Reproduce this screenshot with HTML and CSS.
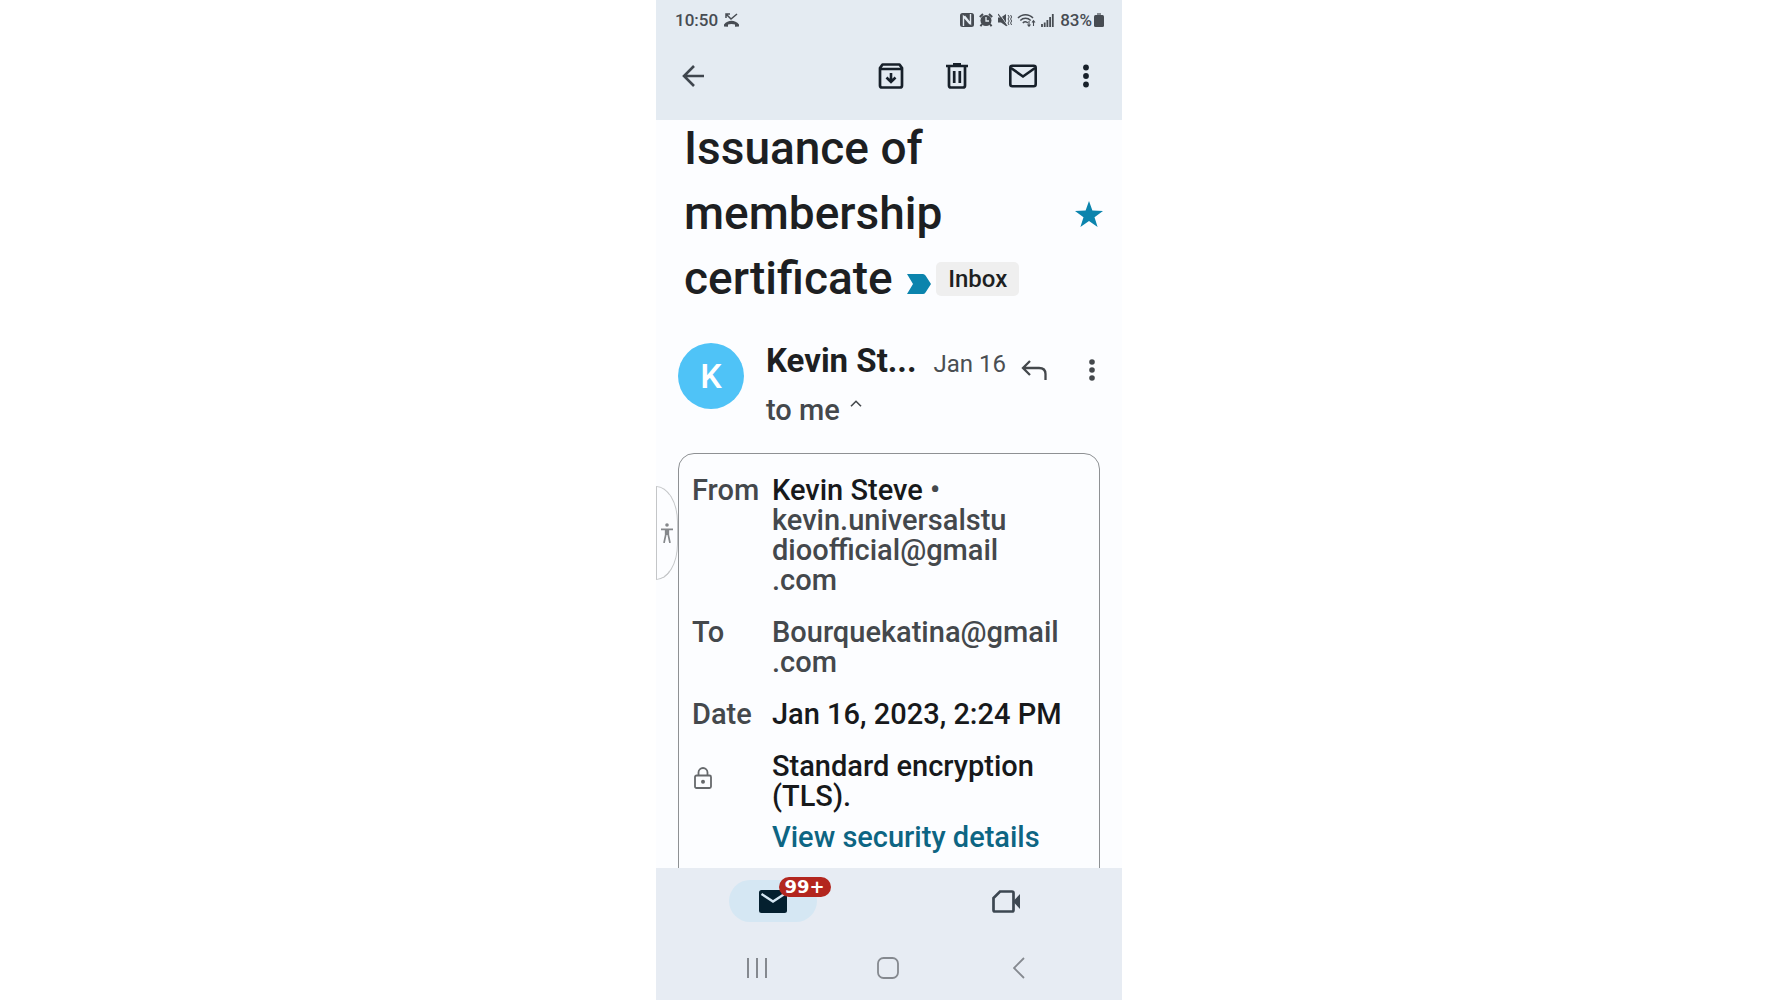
FILE: index.html
```
<!DOCTYPE html>
<html lang="en">
<head>
<meta charset="utf-8">
<meta name="viewport" content="width=device-width, initial-scale=1">
<title>Issuance of membership certificate</title>
<link rel="stylesheet" href="styles.css">
</head>
<body>
<div class="phone">
  <header class="top">
    <div class="status">
      <span>10:50</span>
      <svg class="status-call" width="15" height="14" viewBox="0 0 15 14"><path d="M2 5V1h4M2.500 1.500l4.500 4.500L13 1" fill="none" stroke="currentColor" stroke-width="1.500"/><path d="M0 11.500c4-5 11-5 15 0v2l-4 .3v-2.300c-2-.8-5-.8-7 0v2.300l-4-.3z" fill="currentColor"/></svg>
      <div class="status-icons">
        <svg width="14" height="14" viewBox="0 0 14 14"><rect width="14" height="14" rx="2.500" fill="currentColor"/><path d="M3.500 13V3.500l6.500 7.500M10.500 1v9.500L4.500 3" fill="none" stroke="#e4ebf2" stroke-width="1.400"/></svg>
        <svg width="14" height="14" viewBox="0 0 14 14"><circle cx="7" cy="7.500" r="5.500" fill="currentColor"/><path d="M.8 4L4 1M13.200 4L10 1M3 11l-1.500 2.300M11 11l1.500 2.300" stroke="currentColor" stroke-width="2"/><path d="M7 4v4h3" fill="none" stroke="#e4ebf2" stroke-width="1.300"/></svg>
        <svg width="14" height="14" viewBox="0 0 14 14"><path d="M0 4.500h3L8 1v12L3 9.500H0z" fill="currentColor"/><path d="M1 0l8 12" stroke="#e4ebf2" stroke-width="1"/><path d="M0 1l9 12" stroke="currentColor" stroke-width="1.200"/><path d="M10 2l1.200 2L10 6l1.200 2L10 10l1 2M12.600 2l1 2-1 2 1 2-1 2 1 2" fill="none" stroke="currentColor"/></svg>
        <svg width="19" height="14" viewBox="0 0 19 14"><path d="M1 5c4-4.500 11-4.500 15 0M3.300 7.500c3-3 7.400-3 10.400 0M5.800 10c1.600-1.600 3.800-1.600 5 0" fill="none" stroke="currentColor" stroke-width="1.500"/><path d="M12 8v5M10.500 11.500L12 13.300l1.500-1.800M16.500 13V8M15 9.500l1.500-1.800L18 9.500" fill="none" stroke="currentColor" stroke-width="1.100"/></svg>
        <svg width="13" height="14" viewBox="0 0 13 14"><path d="M1 14v-3M3.700 14V9.500M6.400 14V7M9.100 14V4M11.800 14V1" stroke="currentColor" stroke-width="1.800"/></svg>
      </div>
      <span>83%</span>
      <svg class="status-battery" width="10" height="14" viewBox="0 0 10 14"><rect y="2" width="10" height="12" rx="1.500" fill="currentColor"/><path d="M3 0h4v2H3z" fill="currentColor" opacity=".6"/></svg>
    </div>
    <div class="toolbar">
      <button class="tool tool-back" aria-label="Back"><svg width="22" height="22" viewBox="0 0 22 22"><path d="M22 11H2M12 1L2 11l10 10" fill="none" stroke="currentColor" stroke-width="2.600"/></svg></button>
      <button class="tool" aria-label="Archive"><svg width="26" height="26" viewBox="0 0 26 26"><path d="M2 5l2.500-3.500h17L24 5v17.500q0 2-2 2H4q-2 0-2-2zM2 6h22" fill="none" stroke="currentColor" stroke-width="2.700" stroke-linejoin="round"/><path d="M13 10v8M8.500 14.500L13 19l4.500-4.500" fill="none" stroke="currentColor" stroke-width="2.600"/></svg></button>
      <button class="tool" aria-label="Delete"><svg width="22" height="26" viewBox="0 0 22 26"><path d="M0 3h22M3 3v19.500q0 2 2 2h12q2 0 2-2V3M8.200 8v12M13.800 8v12" fill="none" stroke="currentColor" stroke-width="2.700"/><path d="M7 0h8v3H7z" fill="currentColor"/></svg></button>
      <button class="tool" aria-label="Mark as unread"><svg width="28" height="24" viewBox="0 0 28 24"><rect x="1.300" y="1.800" width="25.400" height="20.400" rx="2" fill="none" stroke="currentColor" stroke-width="2.600"/><path d="M2 4l12 8.500L26 4" fill="none" stroke="currentColor" stroke-width="2.600"/></svg></button>
      <button class="tool tool-more" aria-label="More options"><svg width="6" height="24" viewBox="0 0 6 24"><g fill="currentColor"><circle cx="3" cy="3.500" r="2.900"/><circle cx="3" cy="12" r="2.900"/><circle cx="3" cy="20.500" r="2.900"/></g></svg></button>
    </div>
  </header>

  <main class="message">
    <div class="subject">
      <h1 class="subject-text">Issuance of membership certificate <span class="labels"><svg width="24" height="20" viewBox="0 0 24 20"><path d="M0 0h16q1.500 0 2.500 1.500L24 10l-5.500 8.500Q17.500 20 16 20H0l6-10z" fill="#0b84ad"/></svg><span class="chip">Inbox</span></span></h1>
      <button class="star" aria-label="Starred"><svg width="28" height="26" viewBox="0 0 28 26"><path d="M14 0l3.400 9.600L28 9.900l-8.500 6.300 3.100 9.800L14 20l-8.600 6 3.100-9.800L0 9.900l10.600-.3z" fill="#0b84ad"/></svg></button>
    </div>

    <div class="sender">
      <div class="avatar">K</div>
      <div class="who">
        <div class="name-line"><span class="name">Kevin St...</span><span class="date">Jan 16</span></div>
        <button class="recipients">to me <svg width="12" height="7" viewBox="0 0 12 7"><path d="M1 6.300l5-5 5 5" fill="none" stroke="currentColor" stroke-width="1.600"/></svg></button>
      </div>
      <button class="act" aria-label="Reply"><svg width="26" height="20" viewBox="0 0 26 20"><path d="M9 1L2 8l7 7M2 8h16q6.500 0 6.500 6v6" fill="none" stroke="currentColor" stroke-width="2.300"/></svg></button>
      <button class="act act-more" aria-label="More"><svg width="6" height="22" viewBox="0 0 6 22"><g fill="currentColor"><circle cx="3" cy="3" r="2.800"/><circle cx="3" cy="11" r="2.800"/><circle cx="3" cy="19" r="2.800"/></g></svg></button>
    </div>

    <dl class="details">
      <dt>From</dt>
      <dd><span class="strong">Kevin Steve</span> •<br>kevin.universalstu<br>dioofficial@gmail<br>.com</dd>
      <dt>To</dt>
      <dd>Bourquekatina@gmail<br>.com</dd>
      <dt>Date</dt>
      <dd class="strong">Jan 16, 2023, 2:24 PM</dd>
      <dt class="lock"><svg width="18" height="22" viewBox="0 0 18 22"><rect x="1" y="8.500" width="16" height="12.500" rx="1.500" fill="none" stroke="currentColor" stroke-width="1.800"/><path d="M4.500 8.500V5.500a4.500 4.500 0 0 1 9 0v3" fill="none" stroke="currentColor" stroke-width="1.800"/><circle cx="9" cy="14.700" r="2" fill="currentColor"/></svg></dt>
      <dd class="strong">Standard encryption (TLS).<a class="security" href="#">View security details</a></dd>
    </dl>
    <button class="assist" aria-label="Accessibility"><svg width="12" height="20" viewBox="0 0 12 20"><circle cx="6" cy="2" r="1.800" fill="currentColor"/><path d="M0 6.300h12M6 6v6M4.700 6v6L3 20M7.300 6v6L9 20" fill="none" stroke="currentColor" stroke-width="1.700"/></svg></button>
  </main>

  <footer class="bottom">
    <nav class="tabs">
      <a class="tab" href="#" aria-label="Mail"><span class="pill"><svg width="28" height="23" viewBox="0 0 28 23"><rect width="28" height="23" rx="2.500" fill="#04202f"/><path d="M2.500 4L14 11.500 25.500 4" fill="none" stroke="#d5e7f3" stroke-width="2.400"/></svg><span class="badge">99+</span></span></a>
      <a class="tab" href="#" aria-label="Meet"><svg width="28" height="23" viewBox="0 0 28 23"><path d="M8 1.500h12q1.500 0 1.500 1.500v17q0 1.500-1.500 1.500H3q-1.500 0-1.500-1.500V8z" fill="none" stroke="#3d4751" stroke-width="2.700"/><path d="M21 11.500l7-7.500v15z" fill="#3d4751"/></svg></a>
    </nav>
    <nav class="system">
      <button aria-label="Recent apps"><svg width="22" height="22" viewBox="0 0 22 22"><path d="M2 1v20M11 1v20M20 1v20" stroke="currentColor" stroke-width="2"/></svg></button>
      <button aria-label="Home"><svg width="22" height="22" viewBox="0 0 22 22"><rect x="1" y="1" width="20" height="20" rx="5.500" fill="none" stroke="currentColor" stroke-width="1.800"/></svg></button>
      <button aria-label="Back"><svg width="12" height="22" viewBox="0 0 12 22"><path d="M11 1L1 11l10 10" fill="none" stroke="currentColor" stroke-width="1.800"/></svg></button>
    </nav>
  </footer>
</div>
</body>
</html>
```
FILE: styles.css
```
* {
  box-sizing: border-box;
}

body {
  margin: 0;
  background: #fff;
  font-family: Roboto, "Liberation Sans", sans-serif;
  color: #1d1f22;
}

button {
  margin: 0;
  padding: 0;
  border: 0;
  background: none;
  color: inherit;
  font: inherit;
}

svg {
  display: block;
  flex: none;
}

.phone {
  display: flex;
  flex-direction: column;
  width: 100%;
  max-width: 466px;
  height: 100vh;
  margin: 0 auto;
  background: #fcfdff;
}

/* Status bar and toolbar */
.top {
  flex: none;
  padding-bottom: 8px;
  background: #e4ebf2;
}

.status {
  display: flex;
  align-items: center;
  height: 40px;
  padding: 0 18px 0 19px;
  color: #474c53;
  font-size: 17px;
  font-weight: 500;
}

.status-call {
  margin-left: 6px;
}

.status-icons {
  display: flex;
  gap: 5px;
  margin: 0 6px 0 auto;
}

.status-battery {
  margin-left: 2px;
}

.toolbar {
  display: flex;
  align-items: center;
  height: 72px;
  padding: 0 6px 0 26px;
  color: #17202a;
}

.tool {
  display: flex;
  justify-content: center;
  width: 66px;
}

.tool-back {
  justify-content: flex-start;
  margin-right: auto;
  color: #3f464e;
}

.tool-more {
  width: 60px;
}

/* Message */
.message {
  position: relative;
  flex: 1;
  min-height: 0;
  overflow: hidden;
}

.subject {
  display: flex;
  align-items: center;
  justify-content: space-between;
  margin-top: -4px;
  padding: 0 19px 0 28px;
}

.subject-text {
  width: 350px;
  margin: 0;
  font-size: 46px;
  font-weight: 500;
  line-height: 65px;
}

.labels {
  display: inline-flex;
  align-items: center;
  gap: 5px;
  vertical-align: top;
  height: 65px;
  margin-left: 3px;
}

.labels svg {
  margin-top: 10px;
}

.chip {
  padding: 0 12px;
  border-radius: 5px;
  background: #efefef;
  font-size: 24px;
  font-weight: 500;
  line-height: 34px;
}

.sender {
  display: flex;
  padding: 28px 27px 0 22px;
}

.avatar {
  display: flex;
  align-items: center;
  justify-content: center;
  flex: none;
  width: 66px;
  height: 66px;
  margin-top: 4px;
  border-radius: 50%;
  background: #4fc3f7;
  color: #fff;
  font-size: 34px;
  font-weight: 500;
}

.who {
  flex: 1;
  margin-left: 22px;
  white-space: nowrap;
}

.name-line {
  display: flex;
  align-items: baseline;
  gap: 17px;
  line-height: 44px;
}

.name {
  font-size: 33px;
  font-weight: 700;
}

.date {
  color: #4a4e52;
  font-size: 24px;
}

.recipients {
  display: flex;
  gap: 10px;
  color: #44484c;
  font-size: 29px;
  font-weight: 500;
  line-height: 48px;
}

.recipients svg {
  margin-top: 14px;
}

.act {
  display: flex;
  align-items: center;
  height: 62px;
  color: #44484c;
}

.act-more {
  margin-left: 42px;
}

.details {
  display: grid;
  grid-template-columns: 80px 1fr;
  row-gap: 22px;
  margin: 19px 22px 0;
  padding: 21px 14px 40px 13px;
  border: 1px solid #8e9194;
  border-radius: 16px;
  color: #44484c;
  font-size: 29px;
  font-weight: 500;
  line-height: 30px;
}

.details dd {
  margin: 0;
}

.details .strong {
  color: #17191b;
}

.lock {
  padding: 16px 0 0 2px;
  color: #66696c;
}

.details .security {
  display: block;
  margin-top: 11px;
  color: #0d6583;
  text-decoration: none;
}

.assist {
  position: absolute;
  top: 366px;
  left: 0;
  display: flex;
  align-items: center;
  justify-content: center;
  width: 22px;
  height: 94px;
  border: 1px solid #c4c6c8;
  border-radius: 0 22px 22px 0 / 0 36px 36px 0;
  color: #85888b;
}

/* Bottom bars */
.bottom {
  flex: none;
  background: #e7ecf3;
}

.tabs {
  display: grid;
  grid-template-columns: 1fr 1fr;
  height: 66px;
}

.tab {
  display: flex;
  align-items: center;
  justify-content: center;
}

.pill {
  position: relative;
  display: flex;
  align-items: center;
  justify-content: center;
  width: 88px;
  height: 42px;
  border-radius: 21px;
  background: #d5e7f3;
}

.badge {
  position: absolute;
  top: -3px;
  left: 50px;
  padding: 0 6px;
  border-radius: 10px;
  background: #b3261e;
  color: #fff;
  font: 700 18px/20px "DejaVu Sans", sans-serif;
}

.system {
  display: grid;
  grid-template-columns: repeat(3, 1fr);
  height: 66px;
  padding: 2px 37px 0 35px;
  color: #85898f;
}

.system button {
  display: flex;
  align-items: center;
  justify-content: center;
}
```
